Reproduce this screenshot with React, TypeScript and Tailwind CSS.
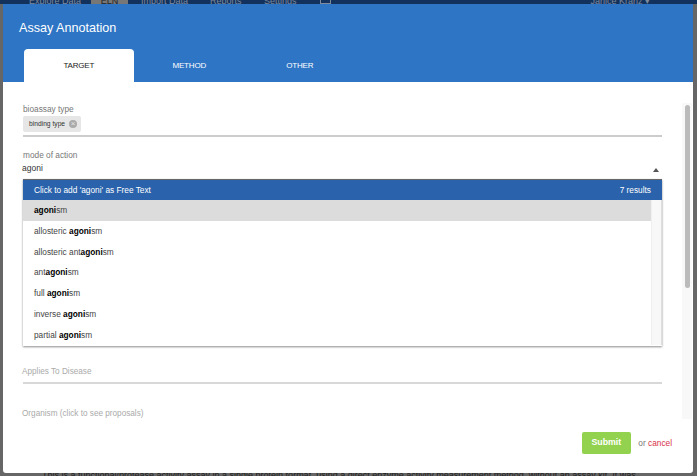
const rows: [string, string][] = [
  ['', 'sm'],
  ['allosteric ', 'sm'],
  ['allosteric ant', 'sm'],
  ['ant', 'sm'],
  ['full ', 'sm'],
  ['inverse ', 'sm'],
  ['partial ', 'sm'],
];

function Backdrop() {
  return (
    <div className="absolute inset-0 flex flex-col justify-between bg-[#666666]">
      <div className="flex h-[4px] overflow-hidden bg-[#12315c] text-[9px] leading-[3px] text-[#7f8a9c]">
        <span className="ml-[29px] w-[62px]">Explore Data</span>
        <span className="w-[37px] bg-[#777777] text-center text-[#222222]">ELN</span>
        <span className="ml-[13px] w-[69px]">Import Data</span>
        <span className="w-[54px]">Reports</span>
        <span className="w-[56px]">Settings</span>
        <span className="h-[4px] w-[11px] border-x border-b border-[#7f8a9c]" />
        <span className="ml-auto mr-[47px]">Janice Kranz ▾</span>
      </div>
      <div className="ml-[42px] h-[3px] overflow-hidden whitespace-nowrap text-[9px] leading-[5px] text-[#1f1f1f]">
        This is a functional/protease activity assay in a single protein format, using a direct enzyme activity measurement method, without an assay kit. It was
      </div>
    </div>
  );
}

function Dropdown() {
  return (
    <div className="mt-[6px] h-[167px] border-t border-[#666666] shadow-[0_1px_2px_rgba(0,0,0,0.45)]">
      <div className="flex h-[20px] items-center justify-between bg-[#2a63ac] px-[11px] text-[8.3px] text-white">
        <span>Click to add 'agoni' as Free Text</span>
        <span>7 results</span>
      </div>
      <div className="flex border-r border-[#dddddd]">
        <div className="flex-1">
          {rows.map(([before, after], i) => (
            <div
              key={before + i}
              className={`flex h-[20.75px] items-center whitespace-pre pl-[11px] text-[8.3px] text-[#444444] ${i === 0 ? 'bg-[#dcdcdc]' : 'bg-white'}`}
            >
              {before}
              <b className="text-black">agoni</b>
              {after}
            </div>
          ))}
        </div>
        <div className="w-[10px] border-l border-[#efefef] bg-[#f8f8f8]" />
      </div>
    </div>
  );
}

export default function App() {
  return (
    <div className="relative h-[476px] w-[697px] overflow-hidden font-['Liberation_Sans',Arial,sans-serif]">
      <Backdrop />
      <div className="absolute left-[3px] top-[4px] flex h-[469px] w-[690px] flex-col rounded-b-[3px] bg-white">
        <div className="h-[78px] bg-[#2e75c5] pl-[16px]">
          <div className="pt-[16px] text-[12.6px] leading-[17px] text-white">Assay Annotation</div>
          <div className="ml-[4.5px] mt-[12px] flex text-[8px] leading-[33px] tracking-[-0.2px]">
            <div className="w-[110.5px] rounded-t-[4px] bg-white text-center text-[#222222]">TARGET</div>
            <div className="w-[110.5px] text-center text-white">METHOD</div>
            <div className="w-[110.5px] text-center text-white">OTHER</div>
          </div>
        </div>

        <div className="flex h-[337px] overflow-hidden">
          <div className="ml-[20px] w-[639px] pt-[22px]">
            <div className="text-[8.3px] leading-[10px] text-[#777777]">bioassay type</div>
            <div className="mt-[2px] h-[21px] border-b-2 border-[#cccccc]">
              <div className="flex h-[16px] w-[58px] items-center rounded-[2px] bg-[#e6e6e6] pl-[6px] text-[6.7px] text-[#333333]">
                binding type
                <span className="ml-[4px] flex h-[8px] w-[8px] items-center justify-center rounded-full bg-[#aaaaaa] text-[8px] leading-none text-[#e6e6e6]">×</span>
              </div>
            </div>

            <div className="mt-[13px] text-[8.3px] leading-[10px] text-[#777777]">mode of action</div>
            <div className="-ml-[1px] mt-[3px] flex h-[10px] items-center justify-between text-[8.5px] leading-[10px] text-[#333333]">
              <span>agoni</span>
              <span className="mr-[3px] mt-[3px] h-0 w-0 border-x-[3.5px] border-b-[4px] border-x-transparent border-b-[#555555]" />
            </div>
            <Dropdown />

            <div className="-ml-[1px] mt-[21px] text-[8.2px] leading-[10px] text-[#aaaaaa]">Applies To Disease</div>
            <div className="mt-[5px] h-[2px] bg-[#d8d8d8]" />
            <div className="-ml-[1px] mt-[25px] text-[8.2px] leading-[10px] text-[#aaaaaa]">Organism (click to see proposals)</div>
          </div>
          <div className="ml-[20px] mt-[21px] h-[316px] w-[10px] bg-[#f8f8f8] pl-[3px] pt-[2px]">
            <div className="h-[183px] w-[5px] rounded-full bg-[#bbbbbb]" />
          </div>
        </div>

        <div className="flex h-[54px] items-start justify-end pr-[21px] pt-[13px]">
          <button className="h-[22px] w-[49px] rounded-[2px] bg-[#92d24e] text-[8.8px] font-bold text-white">Submit</button>
          <span className="ml-[7.5px] text-[8.3px] leading-[22px] text-[#777777]">
            or <span className="text-[#d9334a]">cancel</span>
          </span>
        </div>
      </div>
    </div>
  );
}
